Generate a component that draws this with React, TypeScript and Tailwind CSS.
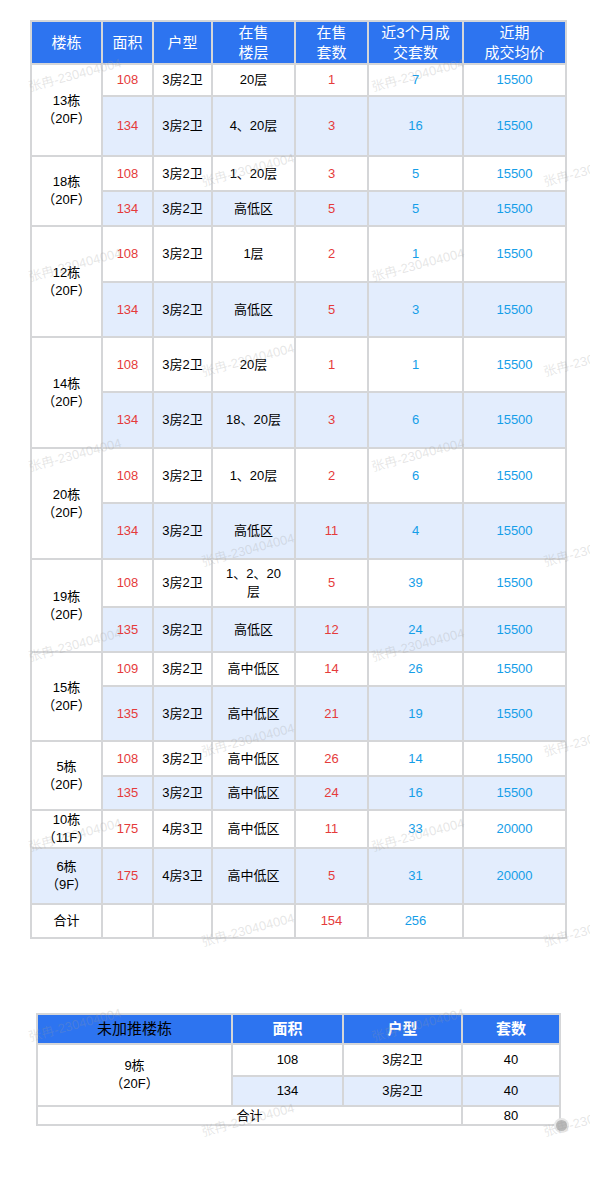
import React from "react";

type Group = {
  b: string;
  f: string;
  h: number[];
  items: string[][];
  blueFirst?: boolean;
};

const groups: Group[] = [
  { b: "13栋", f: "（20F）", h: [32, 60], items: [["108", "3房2卫", "20层", "1", "7", "15500"], ["134", "3房2卫", "4、20层", "3", "16", "15500"]] },
  { b: "18栋", f: "（20F）", h: [35, 35], items: [["108", "3房2卫", "1、20层", "3", "5", "15500"], ["134", "3房2卫", "高低区", "5", "5", "15500"]] },
  { b: "12栋", f: "（20F）", h: [56, 55], items: [["108", "3房2卫", "1层", "2", "1", "15500"], ["134", "3房2卫", "高低区", "5", "3", "15500"]] },
  { b: "14栋", f: "（20F）", h: [55, 56], items: [["108", "3房2卫", "20层", "1", "1", "15500"], ["134", "3房2卫", "18、20层", "3", "6", "15500"]] },
  { b: "20栋", f: "（20F）", h: [55, 56], items: [["108", "3房2卫", "1、20层", "2", "6", "15500"], ["134", "3房2卫", "高低区", "11", "4", "15500"]] },
  { b: "19栋", f: "（20F）", h: [48, 45], items: [["108", "3房2卫", "1、2、20|层", "5", "39", "15500"], ["135", "3房2卫", "高低区", "12", "24", "15500"]] },
  { b: "15栋", f: "（20F）", h: [34, 55], items: [["109", "3房2卫", "高中低区", "14", "26", "15500"], ["135", "3房2卫", "高中低区", "21", "19", "15500"]] },
  { b: "5栋", f: "（20F）", h: [35, 34], items: [["108", "3房2卫", "高中低区", "26", "14", "15500"], ["135", "3房2卫", "高中低区", "24", "16", "15500"]] },
  { b: "10栋", f: "（11F）", h: [37], items: [["175", "4房3卫", "高中低区", "11", "33", "20000"]] },
  { b: "6栋", f: "（9F）", h: [56], items: [["175", "4房3卫", "高中低区", "5", "31", "20000"]], blueFirst: true },
];

const RED = "text-[#e53b3b]";
const BLUE = "text-[#159ee8]";
const cell = "border-2 border-[#d5d6d8] text-center align-middle p-0";

function Floor({ t }: { t: string }) {
  const parts = t.split("|");
  return (
    <>
      {parts.map((p, i) => (
        <React.Fragment key={i}>
          {i > 0 && <br />}
          {p}
        </React.Fragment>
      ))}
    </>
  );
}

const marks: { x: number; y: number }[] = [];
for (let k = 0; k < 7; k++) {
  marks.push({ x: 75, y: 75 + 190 * k });
  marks.push({ x: 418, y: 75 + 190 * k });
  marks.push({ x: 248, y: 170 + 190 * k });
  marks.push({ x: 590, y: 170 + 190 * k });
}

export default function App() {
  return (
    <div
      className="relative w-[590px] h-[1193px] bg-white overflow-hidden text-[13px] text-black"
      style={{ fontFamily: '"Liberation Sans", "Noto Sans CJK SC", sans-serif' }}
    >
      <div className="pt-[20px] pl-[30px]">
        <table className="border-collapse table-fixed w-[535px] leading-[18px]">
          <colgroup>
            <col className="w-[71px]" />
            <col className="w-[51px]" />
            <col className="w-[59px]" />
            <col className="w-[83px]" />
            <col className="w-[73px]" />
            <col className="w-[95px]" />
            <col className="w-[103px]" />
          </colgroup>
          <thead>
            <tr className="h-[43px] bg-[#2d74f0] text-white text-[15px] leading-[20px]">
              <th className={`${cell} font-normal`}>楼栋</th>
              <th className={`${cell} font-normal`}>面积</th>
              <th className={`${cell} font-normal`}>户型</th>
              <th className={`${cell} font-normal`}>在售<br />楼层</th>
              <th className={`${cell} font-normal`}>在售<br />套数</th>
              <th className={`${cell} font-normal`}>近3个月成<br />交套数</th>
              <th className={`${cell} font-normal`}>近期<br />成交均价</th>
            </tr>
          </thead>
          <tbody>
            {groups.map((g) =>
              g.items.map((it, i) => {
                const blue = i === 1 || g.blueFirst;
                const bg = blue ? "bg-[#e3edfd]" : "bg-white";
                return (
                  <tr key={g.b + i} style={{ height: g.h[i] }}>
                    {i === 0 && (
                      <td rowSpan={g.items.length} className={`${cell} ${g.blueFirst ? "bg-[#e3edfd]" : "bg-white"}`}>
                        {g.b}
                        <br />
                        {g.f}
                      </td>
                    )}
                    <td className={`${cell} ${bg} ${RED}`}>{it[0]}</td>
                    <td className={`${cell} ${bg}`}>{it[1]}</td>
                    <td className={`${cell} ${bg}`}>
                      <Floor t={it[2]} />
                    </td>
                    <td className={`${cell} ${bg} ${RED}`}>{it[3]}</td>
                    <td className={`${cell} ${bg} ${BLUE}`}>{it[4]}</td>
                    <td className={`${cell} ${bg} ${BLUE}`}>{it[5]}</td>
                  </tr>
                );
              })
            )}
            <tr className="h-[34px] bg-white">
              <td className={cell}>合计</td>
              <td className={cell}></td>
              <td className={cell}></td>
              <td className={cell}></td>
              <td className={`${cell} ${RED}`}>154</td>
              <td className={`${cell} ${BLUE}`}>256</td>
              <td className={cell}></td>
            </tr>
          </tbody>
        </table>
      </div>

      <div className="pt-[74px] pl-[36px]">
        <table className="border-collapse table-fixed w-[523px] leading-[18px]">
          <colgroup>
            <col className="w-[195px]" />
            <col className="w-[111px]" />
            <col className="w-[119px]" />
            <col className="w-[98px]" />
          </colgroup>
          <thead>
            <tr className="h-[30px] bg-[#2d74f0] text-[15px]">
              <th className={`${cell} font-normal text-black`}>未加推楼栋</th>
              <th className={`${cell} font-bold text-white`}>面积</th>
              <th className={`${cell} font-bold text-white`}>户型</th>
              <th className={`${cell} font-bold text-white`}>套数</th>
            </tr>
          </thead>
          <tbody>
            <tr className="h-[32px] bg-white">
              <td rowSpan={2} className={`${cell} bg-white`}>
                9栋
                <br />
                （20F）
              </td>
              <td className={cell}>108</td>
              <td className={cell}>3房2卫</td>
              <td className={cell}>40</td>
            </tr>
            <tr className="h-[30px] bg-[#e3edfd]">
              <td className={cell}>134</td>
              <td className={cell}>3房2卫</td>
              <td className={cell}>40</td>
            </tr>
            <tr className="h-[19px] bg-white leading-[15px]">
              <td colSpan={3} className={cell}>合计</td>
              <td className={cell}>80</td>
            </tr>
          </tbody>
        </table>
      </div>

      <div className="absolute left-[556px] top-[1120px] w-[11px] h-[11px] rounded-full bg-[#b9b9b9] ring-2 ring-[#e6e6e6]" />

      {marks.map((m, i) => (
        <div
          key={i}
          className="absolute pointer-events-none whitespace-nowrap text-[13px] text-[#9a9a9a]/25 -rotate-[15deg] -translate-x-1/2 -translate-y-1/2"
          style={{ left: m.x, top: m.y }}
        >
          张冉-230404004
        </div>
      ))}
    </div>
  );
}
